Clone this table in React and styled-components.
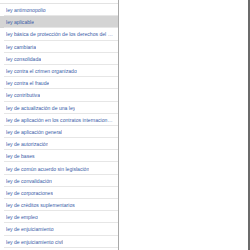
import React from 'react';
import styled, { createGlobalStyle } from 'styled-components';

const terms = [
  'ley antimonopolio',
  'ley aplicable',
  'ley básica de protección de los derechos del consumidor',
  'ley cambiaria',
  'ley consolidada',
  'ley contra el crimen organizado',
  'ley contra el fraude',
  'ley contributiva',
  'ley de actualización de una ley',
  'ley de aplicación en los contratos internacionales',
  'ley de aplicación general',
  'ley de autorización',
  'ley de bases',
  'ley de común acuerdo sin legislación',
  'ley de convalidación',
  'ley de corporaciones',
  'ley de créditos suplementarios',
  'ley de empleo',
  'ley de enjuiciamiento',
  'ley de enjuiciamiento civil',
  'ley de enjuiciamiento criminal',
];

const SELECTED = 1;

const App = () => {
  return (
    <>
      <GlobalStyle />
      <Screen>
        <Sidebar>
          <TermList>
            {terms.map((term, i) => (
              <TermRow key={term} selected={i === SELECTED}>
                <TermText>{term}</TermText>
              </TermRow>
            ))}
          </TermList>
        </Sidebar>
        <Detail />
      </Screen>
    </>
  );
};

export default App;

const GlobalStyle = createGlobalStyle`
  html, body {
    margin: 0;
    padding: 0;
    width: 250px;
    height: 250px;
    overflow: hidden;
    background: #fff;
  }
`;

const Screen = styled.div`
  display: flex;
  width: 250px;
  height: 250px;
  box-sizing: border-box;
  border-right: 2px solid #6b6b6b;
  overflow: hidden;
  font-family: "Liberation Sans", Arial, sans-serif;
`;

const Sidebar = styled.div`
  width: 119px;
  flex-shrink: 0;
  box-sizing: border-box;
  border-right: 1px solid #a9a9a9;
  padding-top: 3px;
  background: #fff;
`;

const TermList = styled.ul`
  list-style: none;
  margin: 0;
  padding: 0;
  border-top: 1px solid #e3e3e3;
`;

const TermRow = styled.li`
  height: 12.2px;
  display: flex;
  align-items: center;
  padding: 0 5px 0 6px;
  box-sizing: border-box;
  background: ${(p) => (p.selected ? '#d4d4d4' : '#fff')};
  position: relative;

  &::after {
    content: '';
    position: absolute;
    left: 4px;
    right: 0;
    bottom: 0;
    height: 1px;
    background: #e6e6e6;
  }
`;

const TermText = styled.span`
  font-size: 5.1px;
  color: #3a5ca8;
  white-space: nowrap;
  overflow: hidden;
  text-overflow: ellipsis;
`;

const Detail = styled.div`
  flex: 1;
  background: #fff;
`;
